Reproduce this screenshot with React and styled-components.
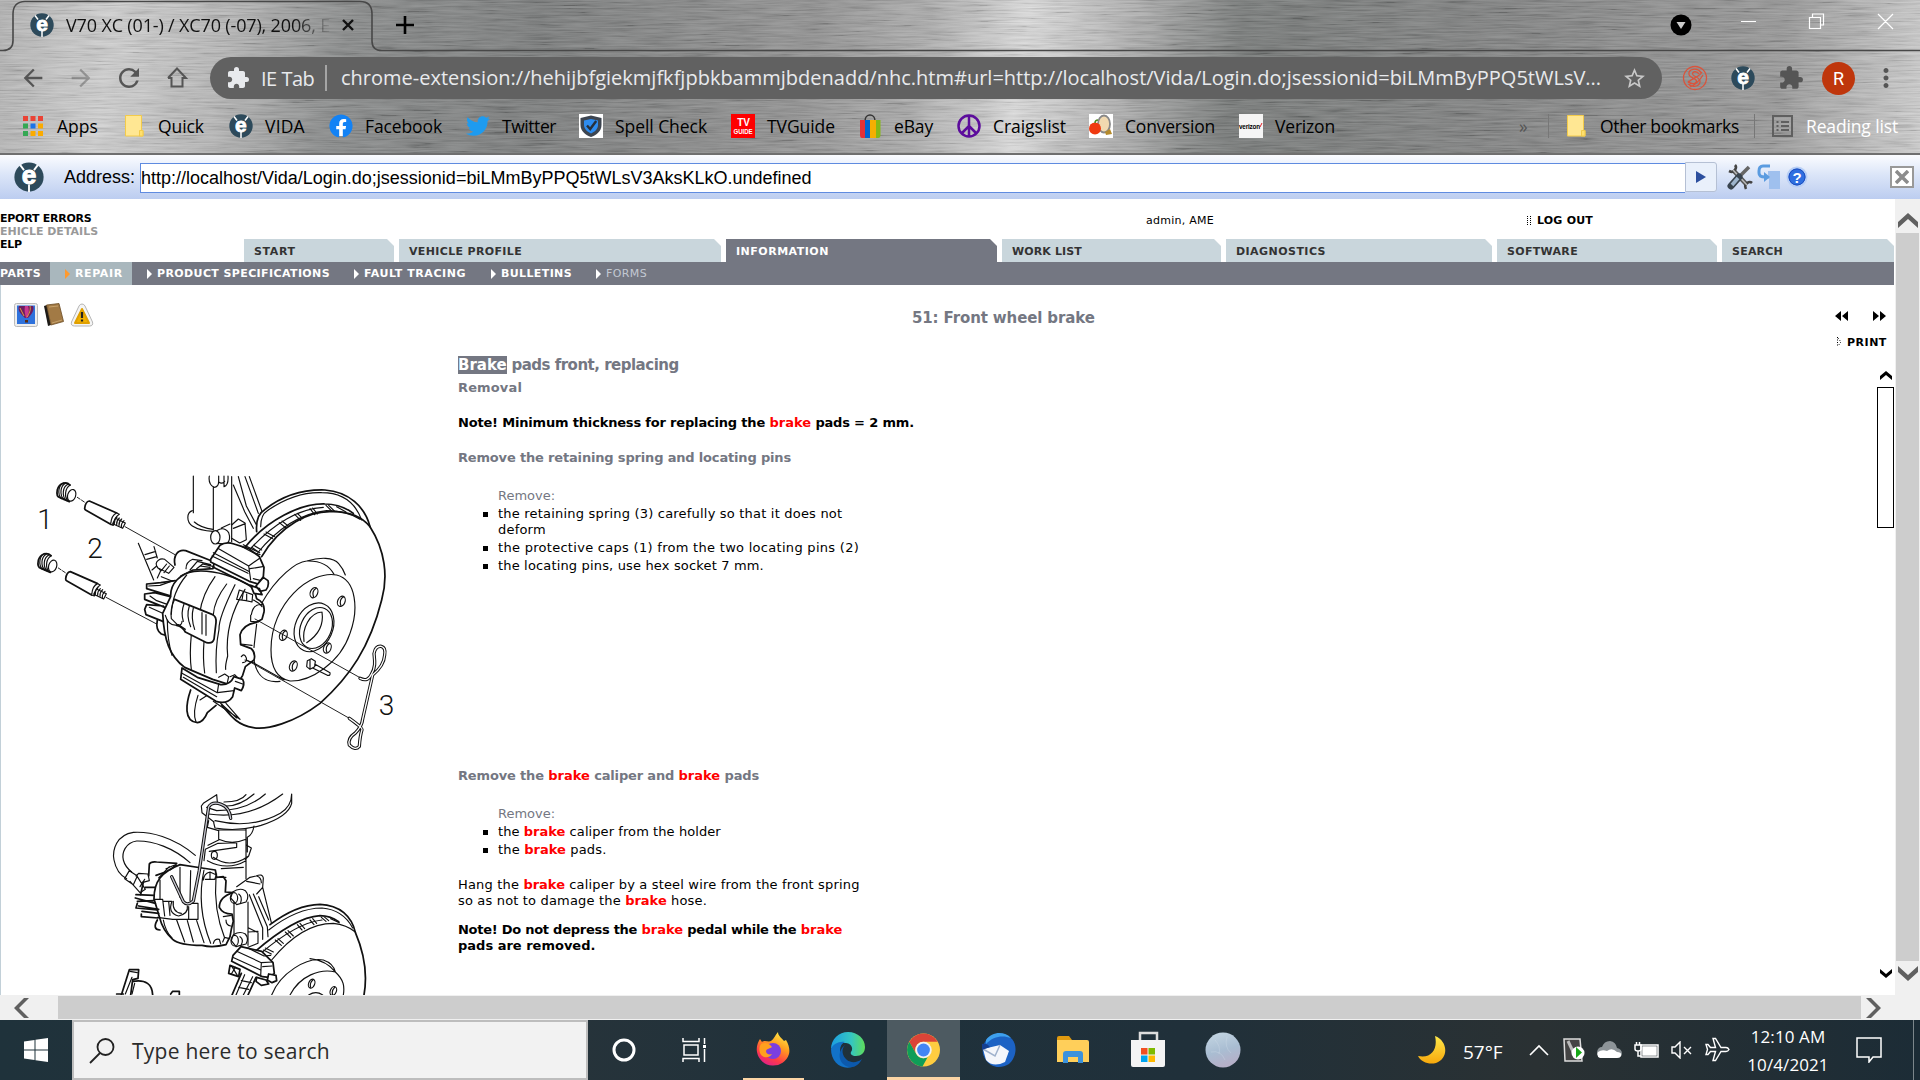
import React from 'react';
import styled, { createGlobalStyle, css } from 'styled-components';
import {
  MdArrowBack,
  MdArrowForward,
  MdRefresh,
  MdExtension,
  MdStarBorder,
  MdMoreVert,
} from 'react-icons/md';
import { FaFacebook, FaTwitter } from 'react-icons/fa';

const GlobalStyle = createGlobalStyle`
  * {
    box-sizing: border-box;
  }
  body {
    margin: 0;
    overflow: hidden;
    background: #fff;
  }
  svg {
    display: block;
    flex: none;
  }
`;

const uiFont = css`
  font-family: 'Open Sans', 'Noto Sans', sans-serif;
`;
const pageFont = css`
  font-family: 'DejaVu Sans', sans-serif;
`;

const Screen = styled.div`
  width: 1920px;
  height: 1080px;
  display: flex;
  flex-direction: column;
  overflow: hidden;
`;

/* ---------- browser frame ---------- */

const BrowserFrame = styled.header`
  position: relative;
  height: 155px;
  flex: none;
  display: flex;
  flex-direction: column;
  border-bottom: 2px solid #6f6f6f;
  isolation: isolate;
  ${uiFont}
`;

const FrameArt = styled.svg`
  position: absolute;
  inset: 0;
  z-index: -1;
`;

const TabStrip = styled.div`
  height: 50px;
  display: flex;
  align-items: center;
  padding-left: 30px;
`;

const TabTitle = styled.div`
  width: 266px;
  margin-left: 12px;
  font-size: 18px;
  letter-spacing: -0.15px;
  white-space: nowrap;
  color: #111;
  mask-image: linear-gradient(90deg, #000 228px, transparent 268px);
`;

const TabClose = styled.svg`
  margin: 0 41px 0 9px;
`;

const WindowButtons = styled.div`
  display: flex;
  align-items: center;
  margin-left: auto;
`;

const Toolbar = styled.div`
  height: 55px;
  display: flex;
  align-items: center;
  padding: 1px 0 0 19px;
  color: #555;
`;

const NavIcon = styled.div`
  width: 28px;
  margin-right: 20px;
  display: flex;
  justify-content: center;
  opacity: ${(p) => (p.$off ? 0.45 : 1)};
`;

const Omnibox = styled.div`
  width: 1452px;
  height: 42px;
  margin-left: -1px;
  border-radius: 21px;
  background: #616161;
  color: #e8eaed;
  display: flex;
  align-items: center;
  padding-left: 16px;
  font-size: 20px;
`;

const SiteName = styled.span`
  margin-left: 11px;
  padding-top: 1px;
  width: 64px;
  letter-spacing: -0.5px;
  white-space: nowrap;
`;

const Url = styled.span`
  border-left: 2px solid #a5a5a5;
  line-height: 26px;
  padding-left: 14px;
  width: 1297px;
  white-space: nowrap;
`;

const Avatar = styled.div`
  width: 33px;
  height: 33px;
  margin: 0 -7px 0 -5px;
  border-radius: 50%;
  background: #bf360c;
  color: #fff;
  font: 18px/33px Roboto, sans-serif;
  text-align: center;
`;

const Extensions = styled.div`
  display: flex;
  align-items: center;
  margin-left: 20px;
  gap: 23px;
`;

const Bookmarks = styled.nav`
  height: 42px;
  display: flex;
  align-items: center;
  padding-left: 21px;
  font-size: 17.5px;
  color: #000;
`;

const Bookmark = styled.div`
  width: ${(p) => p.$w}px;
  flex: none;
  display: flex;
  align-items: center;
  gap: 12px;
  letter-spacing: ${(p) => p.$ls || 0}px;
  white-space: nowrap;
  color: ${(p) => p.$color || '#000'};
`;

const FacebookMark = styled(FaFacebook)`
  color: #1282f5;
  border-radius: 50%;
  background: radial-gradient(#fff 60%, transparent 62%);
`;

const BarDivider = styled.i`
  width: 1px;
  height: 24px;
  margin-right: 15px;
  background: #777;
`;

const Overflow = styled.span`
  width: 29px;
  color: #555;
`;

/* ---------- address strip ---------- */

const AddressBar = styled.div`
  height: 44px;
  flex: none;
  display: flex;
  align-items: center;
  padding-left: 14px;
  background: linear-gradient(#fbfcff, #dbe5f8 45%, #bccdf0);
  font-family: 'Liberation Sans', Arial, sans-serif;
  font-size: 18px;
`;

const AddressLabel = styled.label`
  width: 77px;
  padding-left: 1px;
  margin-left: 19px;
  white-space: nowrap;
`;

const AddressInput = styled.div`
  width: 1545px;
  height: 30px;
  margin-top: 2px;
  border: 1px solid #5f8be0;
  border-right: 0;
  background: #fff;
  line-height: 28px;
`;

const GoButton = styled.div`
  width: 32px;
  height: 30px;
  border: 1px solid #b5c0d4;
  border-radius: 0 3px 3px 0;
  background: #e9f0fb;
  display: grid;
  place-items: center;
`;

const AddressTools = styled.div`
  display: flex;
  gap: 4px;
  margin-left: 10px;
`;

const CloseBox = styled.div`
  width: 24px;
  height: 22px;
  margin-left: 81px;
  border: 2px solid #999;
  background: #fff;
  display: grid;
  place-items: center;
`;

/* ---------- VIDA page ---------- */

const Viewport = styled.div`
  height: 796px;
  flex: none;
  display: flex;
  background: #fff;
`;

const Page = styled.main`
  width: 1894px;
  margin-right: 1px;
  display: flex;
  flex-direction: column;
  overflow: hidden;
  ${pageFont}
`;

const Head = styled.div`
  height: 63px;
  flex: none;
  display: grid;
  grid-template-columns: 244px 1fr;
`;

const SideLinks = styled.div`
  padding-top: 13px;
  font-size: 11px;
  line-height: 13px;
  font-weight: bold;
  white-space: nowrap;
`;

const SideLink = styled.div`
  letter-spacing: ${(p) => p.$ls || 0}px;
  color: ${(p) => (p.$off ? '#999' : '#000')};
`;

const HeadTop = styled.div`
  height: 40px;
  display: flex;
  align-items: center;
  padding: 2px 0 0 902px;
  font-size: 11px;
`;

const UserName = styled.span`
  width: 381px;
  letter-spacing: 0.26px;
`;

const BoldLink = styled.b`
  margin-left: ${(p) => p.$gap || 0}px;
  font-size: 11px;
  letter-spacing: ${(p) => p.$ls || 0}px;
`;

const MainTabs = styled.div`
  display: flex;
  gap: 5px;
`;

const MainTab = styled.div`
  width: ${(p) => p.$w}px;
  height: 23px;
  padding-left: 10px;
  line-height: 26px;
  font-size: 11px;
  font-weight: bold;
  letter-spacing: ${(p) => p.$ls || 0}px;
  background: ${(p) => (p.$active ? '#747782' : '#c9d6dc')};
  color: ${(p) => (p.$active ? '#fff' : '#333')};
  clip-path: polygon(0 0, calc(100% - 7px) 0, 100% 7px, 100% 100%, 0 100%);
`;

const SubNav = styled.div`
  height: 23px;
  flex: none;
  display: flex;
  background: #747782;
  color: #fff;
  font-size: 11px;
  font-weight: bold;
  line-height: 23px;
`;

const SubItem = styled.div`
  width: ${(p) => p.$w}px;
  padding-left: ${(p) => (p.$plain ? 0 : 15)}px;
  flex: none;
  display: flex;
  align-items: center;
  gap: 5px;
  white-space: nowrap;
  letter-spacing: ${(p) => p.$ls || 0}px;
  background: ${(p) => (p.$active ? '#a9b7bd' : 'none')};
  color: ${(p) => (p.$off ? '#c3c9d2' : '#fff')};
  font-weight: ${(p) => (p.$off ? 'normal' : 'bold')};

  &::before {
    content: ${(p) => (p.$plain ? 'none' : "''")};
    border: solid transparent;
    border-width: 5px 0 5px 5px;
    border-left-color: ${(p) => (p.$active ? '#ff9a2e' : '#fff')};
  }
`;

const Body = styled.div`
  flex: 1;
  display: flex;
  flex-direction: column;
  border-left: 1px solid #c2d0d8;
`;

const DocHead = styled.div`
  height: 70px;
  display: flex;
`;

const DocIcons = styled.div`
  width: 911px;
  display: flex;
  gap: 5px;
  padding: 18px 0 0 13px;
`;

const DocTitle = styled.h1`
  width: 922px;
  margin: 0;
  padding-top: 24px;
  font-size: 15px;
  line-height: 18px;
  letter-spacing: -0.13px;
  color: #747782;
`;

const DocActions = styled.div`
  padding-top: 26px;
  display: flex;
  flex-direction: column;
  gap: 16px;
`;

const ActionRow = styled.div`
  display: flex;
  align-items: center;
  gap: ${(p) => p.$gap}px;
  height: 10px;
  padding-left: 1px;
`;

const Doc = styled.div`
  display: flex;
  height: 640px;
`;

const Figures = styled.div`
  width: 457px;
  padding-top: 105px;
  margin-left: -1px;
  margin-right: 1px;
  overflow: hidden;
`;

const Fig = styled.svg`
  margin: ${(p) => p.$m};
  fill: none;
  stroke: #111;
  stroke-width: 3.5;
  stroke-linecap: round;
  stroke-linejoin: round;

  .w {
    fill: #fff;
  }
  .b {
    stroke-width: 5.2;
  }
  .t {
    stroke-width: 2.8;
  }
  .wire {
    stroke-width: 10;
  }
  .core {
    stroke-width: 4;
  }
  text {
    font: 300 84px Roboto, sans-serif;
    fill: #111;
    stroke: none;
  }
`;

const Article = styled.article`
  width: 1419px;
  padding-top: 1px;
  font-size: 13px;
  line-height: 16px;
  color: #000;
`;

const Hit = styled.b`
  color: #f00;
  letter-spacing: 0;
`;

const ArticleTitle = styled.h2`
  margin: 0 0 6px;
  font-size: 15px;
  line-height: 18px;
  letter-spacing: -0.5px;
  color: #747782;

  mark {
    background: #747782;
    color: #fff;
    letter-spacing: 0;
  }
`;

const Line = styled.div`
  margin-bottom: ${(p) => p.$mb || 0}px;
  letter-spacing: ${(p) => p.$ls || 0}px;
  font-weight: ${(p) => (p.$bold ? 'bold' : 'normal')};
  color: ${(p) => (p.$grey ? '#747782' : '#000')};
`;

const Steps = styled.div`
  padding-left: 40px;
  height: ${(p) => p.$h}px;
`;

const Step = styled(Line)`
  margin: 2px 0 0 -15px;
  display: flex;
  gap: 10px;

  &::before {
    content: '';
    width: 5px;
    height: 5px;
    margin-top: 6px;
    background: #000;
  }
`;

const DocScroll = styled.div`
  width: 17px;
  display: flex;
  flex-direction: column;
  align-items: center;
  padding: 16px 0 17px;
`;

const DocThumb = styled.div`
  width: 17px;
  height: 141px;
  margin: 7px 0 auto;
  border: 1px solid #000;
`;

const VScroll = styled.div`
  width: 25px;
  display: flex;
  flex-direction: column;
  align-items: center;
  background: #f0f0f0;
  padding: 14px 1px;
`;

const VThumb = styled.div`
  width: 23px;
  height: 728px;
  margin: 5px 0;
  background: #cdcdcd;
`;

const HScroll = styled.div`
  height: 25px;
  flex: none;
  display: flex;
  align-items: center;
  background: #f0f0f0;
  padding-left: 14px;
`;

const HThumb = styled.div`
  width: 1803px;
  height: 23px;
  margin: 0 5px 0 29px;
  background: #cdcdcd;
`;

/* ---------- taskbar ---------- */

const Taskbar = styled.footer`
  height: 60px;
  flex: none;
  display: flex;
  background: linear-gradient(90deg, #1f323b, #26333a 30%, #1f313b 45%, #20303a 62%, #2a3133 80%, #1c2c36);
  color: #fff;
  ${uiFont}
`;

const StartButton = styled.div`
  width: 72px;
  display: grid;
  place-items: center;
`;

const SearchBox = styled.div`
  width: 516px;
  height: 60px;
  border: 2px solid #bdbdbd;
  background: #f2f2f2;
  color: #2b2b2b;
  font-size: 21px;
  display: flex;
  align-items: center;
  padding: 2px 0 0 15px;
  gap: 17px;
  letter-spacing: 0.25px;
`;

const AppButton = styled.div`
  width: ${(p) => p.$w || 75}px;
  height: 60px;
  display: grid;
  place-items: center;
  padding: 0 ${(p) => p.$pr || 0}px 1px 0;
  background: ${(p) => (p.$active ? '#4d5a61' : 'none')};
  box-shadow: ${(p) => (p.$active ? 'inset 0 -3px #fcd5a5' : 'none')};
`;

const RunningMark = styled.div`
  width: 61px;
  height: 60px;
  display: grid;
  place-items: center;
  border-bottom: 3px solid #fcd5a5;
  margin-top: 1px;
`;

const Tray = styled.div`
  margin-left: auto;
  display: flex;
  align-items: center;
  padding-bottom: 1px;
`;

const Weather = styled.span`
  width: 66px;
  margin-left: 17px;
  padding-top: 4px;
  font-size: 19px;
`;

const TrayIcons = styled.div`
  display: flex;
  align-items: center;
  gap: 12px;
`;

const Clock = styled.div`
  width: 84px;
  margin: 3px 0 0 16px;
  text-align: center;
  font-size: 17px;
  line-height: 28px;
  letter-spacing: 0.1px;
  white-space: nowrap;
`;

const ShowDesktop = styled.i`
  width: 7px;
  height: 60px;
  margin: 1px 0 0 31px;
  border-left: 1px solid #7c868b;
`;

/* ---------- icons ---------- */

const VidaLogo = ({ size = 24 }) => (
  <svg width={size} height={size} viewBox="0 0 24 24">
    <circle cx="12" cy="12" r="11.7" fill="#2d4a5b" />
    <path d="M5 2.5 8 6.500M19 2.5l-3 4M12 18v6" stroke="#fff" strokeWidth="1.5" />
    <text
      x="12"
      y="17.8"
      textAnchor="middle"
      fontFamily="Liberation Sans, sans-serif"
      fontWeight="bold"
      fontSize="21"
      fill="#fff"
      stroke="#fff"
      strokeWidth=".8"
    >
      e
    </text>
  </svg>
);

const APP_COLORS = ['#ea4335', '#ea4335', '#ea4335', '#34a853', '#1a73e8', '#fbab00', '#34a853', '#fbab00', '#fbab00'];

const AppsIcon = () => (
  <svg width="24" height="24">
    {APP_COLORS.map((c, i) => (
      <rect key={i} x={2 + (i % 3) * 7.5} y={2 + Math.floor(i / 3) * 7.5} width="5" height="5" fill={c} />
    ))}
  </svg>
);

const FolderIcon = () => (
  <svg width="24" height="24">
    <path d="M3.5 1.5h16v15H21V22H3.5z" fill="#ffe793" stroke="#f3cb4a" />
    <path d="M17.5 22v-5.5H21V22z" fill="#ffe06e" stroke="#f3cb4a" />
  </svg>
);

const ShieldIcon = () => (
  <svg width="24" height="24">
    <rect width="24" height="24" fill="#fff" />
    <path d="M12 1.5 22.5 4v7c0 6-5 10-10.5 12C6.5 21 1.5 17 1.5 11V4z" fill="#3d4550" />
    <path d="M12 5l7 1.5V11c0 4-3.5 7-7 8.5C8.5 18 5 15 5 11V6.5z" fill="#2e8cf0" />
    <path d="m8 11.5 3.2 3.5 6-8" fill="none" stroke="#26303c" strokeWidth="2.4" />
  </svg>
);

const TvGuideIcon = () => (
  <svg width="24" height="24" fontFamily="Liberation Sans, sans-serif" fontWeight="bold" fill="#fff" textAnchor="middle">
    <rect width="24" height="24" fill="#f00" />
    <text x="12.5" y="12" fontSize="10">TV</text>
    <text x="12" y="19.5" fontSize="6.5" textLength="19" lengthAdjust="spacingAndGlyphs">GUIDE</text>
  </svg>
);

const EbayIcon = () => (
  <svg width="24" height="24">
    <path d="M7 7c0-8 10-8 10 0" fill="none" stroke="#333" strokeWidth="1.5" />
    <path d="M2 6h5v18H4q-2 0-2-3z" fill="#e53238" />
    <path d="M7 6h5v18H7z" fill="#0064d2" />
    <path d="M12 6h6v18h-6z" fill="#f5af02" />
    <path d="M18 6h4.500v15q0 3-2.500 3h-2z" fill="#86b817" />
  </svg>
);

const PeaceIcon = () => (
  <svg width="24" height="24" fill="none" stroke="#5c0c9c" strokeWidth="2.5">
    <circle cx="12" cy="12" r="10.5" />
    <path d="M12 1.500v21M12 12l-7.500 7.500M12 12l7.500 7.500" />
  </svg>
);

const ConversionIcon = () => (
  <svg width="24" height="24">
    <rect width="24" height="24" fill="#fff" />
    <ellipse cx="15" cy="10" rx="6" ry="8.5" fill="#f1d9b0" stroke="#888" strokeWidth="1.8" />
    <path d="m16 18 5-3 2 5-6 1z" fill="#b58a2a" />
    <circle cx="6" cy="14.5" r="6" fill="#f03a10" />
    <path d="M6 9q0-3 3-3" fill="none" stroke="#4f8a1d" strokeWidth="1.5" />
  </svg>
);

const VerizonIcon = () => (
  <svg width="24" height="24">
    <rect width="24" height="24" fill="#f5f5f5" />
    <text x="0" y="14.5" fontSize="7" fontFamily="Liberation Sans, sans-serif" fontWeight="bold" textLength="21" lengthAdjust="spacingAndGlyphs">verizon</text>
    <path d="m21 13 2-4" stroke="#e01e26" />
  </svg>
);

const ReadingListIcon = () => (
  <svg width="24" height="24" fill="none" stroke="#5f5f5f" strokeWidth="2">
    <path d="M3 2h19v20H3zM6.500 8h2M11 8h8M6.500 12h2M11 12h8M6.500 16h2M11 16h8" />
  </svg>
);

const HomeIcon = () => (
  <svg width="22" height="24" fill="none" stroke="#555" strokeWidth="2">
    <path d="M5.500 11v9.500h11V11M2 12l9-9.500 9 9.500h-3.500M2 12h3.500" />
  </svg>
);

const SeekIcon = () => (
  <svg width="26" height="26" fill="none" stroke="#d9543c" strokeWidth="1.3">
    <circle cx="13" cy="13" r="11.5" />
    <path d="M19 7.500C15 2 6 4 7 9.500c.8 4 8 3.500 7.500 7-.6 3-6 3-8.500-.5M17 9c-2-3.500-7-2.500-6.500 0 .5 3 8 3 7.500 8-.5 4.500-8 6-11.500 2M6 18C10 12 17 13 20 7M8 22c5-2 10-7 13-12" />
  </svg>
);

const BalloonIcon = () => (
  <svg width="24" height="24">
    <rect x=".5" y=".5" width="23" height="23" rx="2" fill="#eee" stroke="#bbb" />
    <rect x="3" y="2.5" width="18" height="18.5" fill="#2f72dc" />
    <path d="M5 3h14c2 4-2 9-5 12h-3C8 12 3 8 5 3z" fill="#6d1c62" />
    <path d="M11 3c-1 4 0 8 1 12l2-1c1-4 1-8 0-11z" fill="#c9388e" />
    <path d="M16 3c1 4-1 8-3 11M6 5l4 8" stroke="#d9a03c" fill="none" />
    <rect x="11" y="17" width="3" height="2.5" fill="#5a2d12" />
  </svg>
);

const BookIcon = () => (
  <svg width="22" height="24">
    <path d="m1 3 3-1 4 20-3 1z" fill="#1d1a17" />
    <path d="M3.500 2 16 .5l4.500 18L8 22z" fill="#a27a45" stroke="#6b4c24" strokeWidth=".8" />
    <path d="m6 4 9-1M9 20l10-3" stroke="#c7a26b" />
  </svg>
);

const WarningIcon = () => (
  <svg width="24" height="24">
    <path d="M12 1q2 0 3 2l7.500 16q1 4-3 4h-15q-4 0-3-4L9 3q1-2 3-2z" fill="#f4f4f4" stroke="#b5b5b5" />
    <path d="M12 6l7 14H5z" fill="#f0b000" stroke="#e0a000" strokeWidth="2" strokeLinejoin="round" />
    <path d="M12 9v6M12 16.500v2" stroke="#222" strokeWidth="2.2" />
  </svg>
);

const Chevron = ({ dir, w = 20, h = 15, color = '#606060', t = 6 }) => {
  const up = `M0 ${h}V${h - t}L${w / 2} 0 ${w} ${h - t}V${h}L${w / 2} ${t}z`;
  const left = `M${h} 0H${h - t + 1}L0 ${w / 2} ${h - t + 1} ${w}H${h}L${t - 1} ${w / 2}z`;
  const flat = dir === 'left' || dir === 'right';
  const flips = {
    down: `scale(1 -1) translate(0 -${h})`,
    right: `scale(-1 1) translate(-${h} 0)`,
  };
  return (
    <svg width={flat ? h : w} height={flat ? w : h} fill={color}>
      <path d={flat ? left : up} transform={flips[dir]} />
    </svg>
  );
};

const FirefoxIcon = () => (
  <svg width="36" height="38">
    <defs>
      <linearGradient id="ff" x1=".8" y1="0" x2=".3" y2="1">
        <stop offset="0" stopColor="#fff04a" />
        <stop offset=".4" stopColor="#ff9b1f" />
        <stop offset=".75" stopColor="#ff3b47" />
        <stop offset="1" stopColor="#e0208a" />
      </linearGradient>
    </defs>
    <path d="M2 21C1 16 3 11 5 8l2 3c1-1 2-1 3-1 2 0 4 1 6 0 3-2 4-6 7-9 0 4 4 6 6 9l2-1c3 5 4 10 3 14a16.500 16.500 0 0 1-32-2z" fill="url(#ff)" />
    <circle cx="18" cy="20" r="8" fill="#7b3fe0" />
    <path d="M6 13c4-2 8-1 11 3-2 2-5 1-6 4 0 3 3 4 6 3-3 5-10 4-12-1-1-3-1-6 1-9z" fill="#ffa01e" />
  </svg>
);

const EdgeIcon = () => (
  <svg width="36" height="36" viewBox="0 0 36 36">
    <defs>
      <linearGradient id="eg" x1="0" x2="1">
        <stop offset="0" stopColor="#1b9de2" />
        <stop offset=".6" stopColor="#35c6c0" />
        <stop offset="1" stopColor="#5fdc5a" />
      </linearGradient>
    </defs>
    <path d="M1 17C1 7 9 0 18 0c10 0 17 7 17 15 0 6-4 9-9 9-4 0-6-2-5-4 2-2 2-8-5-9-7 0-12 2-15 6z" fill="url(#eg)" />
    <path d="M1 17c2-5 8-8 14-7-5 2-6 8-4 14 2 5 6 9 11 11C11 38 1 30 1 17z" fill="#1272c8" />
    <path d="M15 13c-4 4-3 11 2 15 4 3 10 3 15-1-3 6-8 9-13 8-10-2-13-15-4-22z" fill="#0c59ac" />
  </svg>
);

const ChromeIcon = () => (
  <svg width="33" height="34" viewBox="0 0 32 32">
    <circle cx="16" cy="16" r="16" fill="#ffcd40" />
    <path d="M2.200 8A16 16 0 0 1 29.800 8H16a8 8 0 0 0-7 12z" fill="#db4437" />
    <path d="M2.200 8 9.100 20A8 8 0 0 0 20 23l-5 9A16 16 0 0 1 2.200 8z" fill="#0f9d58" />
    <circle cx="16" cy="16" r="8" fill="#f1f1f1" />
    <circle cx="16" cy="16" r="6.2" fill="#4285f4" />
  </svg>
);

const ThunderbirdIcon = () => (
  <svg width="36" height="36">
    <path d="M4 12C8 1 24-2 32 7c6 7 4 19-3 25-8 5-18 4-23-4C2 23 2 17 4 12z" fill="#1c62c4" />
    <path d="M6 8C12-1 25-1 31 6c-8-3-18-2-25 6z" fill="#3ea0ee" />
    <path d="m3 17 17-4 9 6-4 11q-12 6-19-2z" fill="#f4f6fb" />
    <path d="m3 17 12 7 5-11" fill="none" stroke="#9fb1cc" strokeWidth="1.5" />
    <path d="M2 12c3-1 6 0 8 3l-8 3z" fill="#153f91" />
  </svg>
);

const ExplorerIcon = () => (
  <svg width="34" height="30">
    <path d="M1 3q0-2 2-2h10l3 4H1z" fill="#e09a10" />
    <path d="M1 5h30q2 0 2 2v20H1z" fill="#ffcf5a" />
    <path d="M7 28V19q0-3 3-3h14q3 0 3 3v9h-5v-6H12v6z" fill="#3b92dc" />
  </svg>
);

const StoreIcon = () => (
  <svg width="36" height="37">
    <path d="M10 12V2h17v10" fill="none" stroke="#ddd" strokeWidth="2.5" />
    <path d="M1 9h34v25q0 2-2 2H3q-2 0-2-2z" fill="#f4f4f4" />
    <path d="M11 17h6.500v6.500H11z" fill="#f25022" />
    <path d="M18.500 17H25v6.500h-6.500z" fill="#7fba00" />
    <path d="M11 24.500h6.500V31H11z" fill="#00a4ef" />
    <path d="M18.500 24.500H25V31h-6.500z" fill="#ffb900" />
  </svg>
);

const GlobeIcon = () => (
  <svg width="36" height="36">
    <defs>
      <linearGradient id="gb" x2=".3" y2="1">
        <stop offset="0" stopColor="#c6d8e4" />
        <stop offset=".6" stopColor="#a9bdd2" />
        <stop offset="1" stopColor="#b5b0c8" />
      </linearGradient>
    </defs>
    <circle cx="18" cy="18" r="17.5" fill="url(#gb)" />
    <path d="M10 8q6 6 4 14M22 5q-3 10 4 16M6 20q10-2 14 8" stroke="#d6e2ea" fill="none" opacity=".3" />
  </svg>
);

const MoonIcon = () => (
  <svg width="29" height="28">
    <defs>
      <linearGradient id="mn" x2="0" y2="1">
        <stop offset="0" stopColor="#ffe84a" />
        <stop offset="1" stopColor="#f7a80c" />
      </linearGradient>
    </defs>
    <path d="M18 0c13 5 14 22 1 27-7 2-15-1-18-7 14 3 20-8 17-20z" fill="url(#mn)" />
  </svg>
);

/* ---------- illustrations ---------- */

const Pin = ({ x, y }) => (
  <g transform={`translate(${x} ${y})`}>
    <path className="w" d="M-12-29C-32-27-36 2-24 19L6 29 20-4 8-18z" stroke="none" />
    <path className="b" d="M10-22C-2-34-22-28-28-8c-3 14 0 22 8 24l28 12" />
    <path d="M-8-29c-18 8-20 34-8 48M-2-28c-18 8-20 36-6 50M5-25c-18 8-20 36-6 50M11-22C-5-14-9 16 6 27" />
    <ellipse className="w" cx="15" cy="9" rx="12" ry="18" transform="rotate(18 15 9)" />
    <path d="M32 15l24 16" strokeDasharray="10 5" className="t" />
    <path className="w b" d="M68 26q-12 2-14 22 0 4 4 6l74 42 18-34z" />
    <path className="w" d="M150 62q-16 6-18 34l8 3q2-24 18-33zM146 78l30 14-8 16-30-14z" />
    <path d="M151 74q-9 8-8 20M158 77q-9 8-8 20M165 80q-9 8-8 20M172 85q-9 8-8 20" />
  </g>
);

const CLIP_PATH =
  'M1080 655q24 12 34-12c14-22 10-42 8-62q4-24 22-22 14 4 10 26-2 32-36 60l-30 132q-2 22-22 42-24 16-18 36 18 18 30 4 2-32 8-50 2-6-38-34';

const HANGER_PATH = 'M452 145q-4-34-28-42-28-10-38 8l-28 190-18 92q-18 16-30 2l-35-75';

const STUDS = [
  [942, 398],
  [1024, 424],
  [850, 526],
  [982, 564],
  [880, 618],
];

const CaliperFigure = () => (
  <Fig $m="0" width="420" height="300" viewBox="0 0 1260 900">
    <text x="112" y="208">1</text>
    <text x="262" y="293">2</text>
    <text x="1136" y="765">3</text>
    <Pin x={200} y={97} />
    <Pin x={143} y={309} />
    {/* strut */}
    <path d="M580 48v110M640 80v130M695 50v195M628 48q-4 24 14 34 14 0 14-18V48M656 66q10 8 18-2M672 48v32q14-4 12-32" />
    <path d="M577 152c-18 6-18 34 0 46q22 14 62 16M583 186q20 18 56 22M700 75l34 80 26 50M715 50l24 88 30 56M735 50l40 110M748 50l38 104" />
    <ellipse cx="646" cy="232" rx="14" ry="20" />
    <path d="M650 212q22-14 36 6 8 22-6 34l-30-2M664 204l26-12M695 195l20-18 20 12 4 50-20 10-24-14M700 205l36-14" />
    {/* disc */}
    <path className="b" d="M785 290C840 195 930 150 1000 155c50 0 85 15 110 45 45 70 55 150 35 220-35 140-95 230-185 310-80 60-160 80-200 73-50-8-70-38-95-68" />
    <path className="b" d="M770 215q-4-50 24-66C850 105 910 88 975 90c70 5 120 50 135 110" />
    <path d="M782 200q0-36 20-48C860 112 910 96 965 98q90 0 120 82" />
    <path className="b" d="M735 262C800 180 900 130 975 132c35 0 65 13 85 28" />
    <path d="M750 268C820 190 900 145 970 142M770 282c60-74 130-122 210-130q60 0 100 26" />
    <path d="M755 262l24 16M761 256l24 14M792 222l26 14M798 216l26 14M838 188l20 16M846 183l20 16M884 163l18 18M892 160l16 16M930 146l14 18M938 144l14 18M978 136l18 18M986 136l18 18M1010 140l28 16" />
    {/* hub */}
    <path d="M785 430C830 350 890 305 920 303c40-12 80-12 96 8q14 16 20 34M920 303q60-2 82 40" />
    <path d="M813 570C812 430 930 330 1010 345c60 15 66 105 40 175-30 90-120 145-180 143-40-8-57-43-57-93zM762 600c8 48 36 70 78 64M752 604l100 56" />
    <ellipse cx="942" cy="502" rx="56" ry="76" transform="rotate(24 942 502)" />
    <ellipse cx="948" cy="504" rx="46" ry="64" transform="rotate(24 948 504)" />
    <path d="M966 456c-38 2-60 50-54 88M966 456c6 40-12 70-46 92" />
    {STUDS.map(([x, y]) => (
      <g key={x} transform={`translate(${x} ${y}) rotate(22)`}>
        <ellipse rx="11" ry="16" />
        <path d="M1-15q-10 14 3 28" />
      </g>
    ))}
    <path d="M922 602l12-6 12 8-2 16-14 8-10-8zM930 600v24M944 612l46 26q2 10-8 8l-44-22" />
    {/* hose fitting and upper guide */}
    <path className="w" stroke="none" d="M415 250l44 108 26-8 40-30-60-60z" />
    <path d="M415 250l46 110M462 260l10 34M435 284l32-10M440 298l30-8M456 330l14-12 12 14-10 22" />
    <path className="w" d="M476 300q-14 10-2 24l32 16 16-18-28-24q-10-4-18 2zM500 312l-16 20M508 318l-16 20M484 350l34 14" />
    <path className="w b" d="M525 315c-6-28 8-48 32-43l86 34-4 20-60 4-36 18" />
    <path d="M558 326q0-20 20-28l28 4M570 330l22-26 40 10M590 326l18-14 34 8M600 318l30 4" />
    {/* left fins */}
    <path className="w b" d="M526 362l-44 6-42 4v14l78 24M520 412l-56-14-30 4v16l70 28M490 438l-50-4-6 14 4 16 60 24M472 480q-6 30 12 42l14 4" />
    <path d="M446 378l34-2 40-14M450 408l20 14 40 14M448 442l50 22" />
    {/* caliper body */}
    <path className="w b" d="M512 410c-2-40 30-70 70-76 60-6 130 16 180 52l8 30q26 12 22 40l-6 22-20 10q-36 6-46 36l2 30 32 12q14 14 8 34l-26 20-8 26q-12 26-40 28l-50-16-84-36c-46-34-62-84-66-162z" />
    <path d="M560 345q-44 52-46 118M645 350q-38 52-46 110M680 372q-38 50-40 92M735 388q-62 100-52 200-8 30-6 40M705 374q-50 100-48 134-12 60-8 130M574 524q-6 60 0 104M612 545q-4 50 2 94M502 480q0 60 14 106" />
    <path className="w b" d="M524 418l114 46q12 6 10 24l-6 50q-4 14-22 10l-64-32q-8-16-26-20" />
    <path d="M524 418q-14 28-10 58l18 18q14 4 14-10M552 432q-10 26-2 52M568 438q-10 30 4 62M580 444q-8 30 4 64M606 458v64M618 464v62M496 466q10 36 40 28l20 14" />
    <path d="M710 418l8-28 40 14-2 22-18-4zM730 396l-4 24M740 402v20M760 420q18 8 26 20M754 464q6-34 32-30M752 466v18l24 2M770 492q-6 50-8 70M722 552l34 4M724 590q8-12 14 2t-10 16M735 600l24 8M656 652l18-10 12 8-4 18M690 650l14-6 8 8-8 18" />
    {/* upper bracket */}
    <path className="w b" d="M632 298l28-42q18-12 42-4l44 14 32 24 14 32-2 28-16 22-26-8-116-58z" />
    <path d="M656 266l90 52 34-24M746 318l6 42M636 288l108 52M640 278l106 56M722 258l38 20 20 6M730 254l40 20M760 356l24 6M750 326l38-6" />
    <path className="w b" d="M790 352l14 10q4 16-6 28l-18 4-12-16zM752 376l26 10 8 18-24-4z" />
    <path className="b" d="M640 322l118 58" />
    {/* lower bracket */}
    <path className="w b" d="M572 690c-14 40-22 94 20 98 18-2 26-20 30-30l26-22" />
    <path d="M594 706c-10 30-14 60-6 80M600 720l22-14" />
    <path className="w b" d="M546 624l-4 34 106 66q34 10 50-14l6-26 20 8q12-20 4-34l-26-8q-12 26-40 24l-70-22z" />
    <path d="M546 640l106 58 4-26M550 652l100 58M652 698l50-6M706 664l22 8M640 724l80 54M660 728l50 46M678 730l42 48" />
    {/* leader lines */}
    <path className="t" d="M375 200l150 84M318 412l152 80M765 477l315 176M740 600l310 176" />
    {/* retaining spring */}
    <path className="wire" d={CLIP_PATH} />
    <path className="core" d={CLIP_PATH} stroke="#fff" />
  </Fig>
);

const HangingFigure = () => (
  <Fig $m="10px 0 0 80px" width="340" height="225" viewBox="0 0 1020 675">
    {/* spring coils */}
    <path d="M366 128l-2-20 6-8 40-26 2 22M366 128l36 28M405 152q110 26 196-22 34-22 34-58v28q-10 40-92 66-70 20-138 8l-4-16M386 132q120 18 222-60M380 112l30 10q90 0 146-50M432 96q50 0 66-22M440 108q40 0 82-36" />
    {/* strut */}
    <path d="M386 152l-4 20 34 10v26q40 18 82 0M416 180h82M498 176v150M522 168q-4 26-20 34v44M500 226l14 8-8 24-10 10M384 226l32-16M376 238l38-18 56-2v14l-82 12M376 238l-4 34M382 272q60 32 116 0M400 262q50 36 106-4M424 296l66-4" />
    <ellipse cx="403" cy="256" rx="9" ry="12" />
    {/* hose */}
    <path d="M346 256c-66-56-136-72-186-69-50 7-64 53-58 83 5 26 18 46 38 56M330 278c-50-45-110-66-160-65-35 5-45 37-40 57q5 20 25 36" />
    <path d="M134 326l14-24 24 16-12 26zM150 334l30 34 16-10-24-38M168 318l8-8 28 2 4 20-22 6M180 350l14-22" />
    {/* caliper */}
    <path className="w b" d="M206 318l2-36q4-8 22-6l60 4-16 20-46 16M190 336l-8 38M196 352h30M232 450q-16 28 8 30" />
    <path className="w b" d="M222 386c0-52 22-80 78-102l66 10 40 6 4 22 20-2 8 12-2 34 24 2q-42 12-42 44 10 20 38 20l4 22q-6 20-10 46l-12 24q-40 10-72 2-68 0-88-18-30-26-40-68z" />
    <path d="M236 324l32-34M258 296l24-10M270 300l20-14M240 330v58M300 292v90M332 302l-2 90M372 300q-24 110 20 220M408 322q-8 96 26 182M222 388h26l6 50M250 394h26q-14 36 20 44 30-8 26-30M266 394l4 42M280 394q-4 32 24 36M330 400h24v48h-76l-46-6M326 410v36M250 450q6 34 26 54M290 450l24 66M322 452l18 64M350 452l22 66M370 330q2-20 20-24l18 8M376 328h28l6-16M390 308v20M400 520q4-16 18-12l4 14M428 516l6-14 14 4" />
    <path className="b" d="M168 374l54 2M166 384l60 16M172 394l50-2M176 408l60 10M172 400l-4 14 64 6M186 424l50 6M184 432v8l50 4" />
    <path d="M430 440l24-4M438 450q0 16 14 18M418 322h20" />
    {/* steering knuckle */}
    <path d="M470 350l40-28 18-4q20-8 22 6l-2 28-18 20M500 334l40 8M530 318q14 4 14 20M462 395v104M504 396v130M508 374l40 100v34M520 372l42 98 2 30M548 352l26 106M536 380l30 70M506 474l28 14v32l-30 12M506 486l28-2" />
    <path className="w" d="M452 384l6-18q20-14 38-4 14 16 2 34l-28 8z" />
    <ellipse cx="462" cy="384" rx="11" ry="16" />
    <path className="w" d="M454 512l6-18q20-12 36-2 12 14 2 30l-30 8z" />
    <ellipse cx="464" cy="512" rx="11" ry="16" />
    <path d="M476 372q12 8 6 26M480 500q12 8 4 24" />
    {/* disc */}
    <path className="b" d="M570 464c50-38 100-60 150-61 60 2 95 37 106 84 24 56 38 120 26 188M525 545c75-65 145-105 195-108q30 0 56 18" />
    <path d="M566 480c54-42 110-66 160-66 50 4 76 30 92 60M540 552c70-60 130-96 186-102M575 570c65-80 125-110 185-110q40 4 66 26" />
    <path d="M550 540l24 12M556 534l24 12M586 510l18 16M594 506l16 14M616 486l16 16M624 482l16 16M652 464l14 16M660 460l14 16M690 450l12 14M698 446l12 14M724 442l14 12M732 440l14 12M752 446l26 12" />
    <path d="M575 675c25-65 105-115 155-105q30 10 36 36M630 675c30-58 90-80 136-69 26 24 28 44 24 69M690 566q50 6 76 40M686 675q22-14 42 0" />
    <ellipse cx="695" cy="641" rx="9" ry="14" transform="rotate(22 695 641)" />
    <ellipse cx="760" cy="663" rx="9" ry="14" transform="rotate(22 760 663)" />
    <path d="M692 652q-4-12 6-22M758 674q-4-12 6-22" />
    {/* bracket */}
    <path className="b" d="M484 610l-28 65M528 622l-24 53" />
    <path d="M494 614l-26 61M518 620l-28 55M484 632l30 6M476 652l30 6" />
    <path className="w b" d="M455 574l4-18 24-26 62 14 34 34 4 32-16 12-20-2z" />
    <path d="M470 544l74 34 34-2M544 578l-2 40M458 562l84 38M548 590l28-2M508 536l44 22 20-2" />
    <path className="w b" d="M566 612l22 4 2 16-14 6-14-8zM530 622l28 8 8 12-22 4-16-12zM450 586l30 12-4 22-30-10z" />
    <path d="M456 590l16 26M466 592l-12 20" />
    {/* second caliper, partly scrolled out */}
    <path className="b" d="M124 675l24-76h28l-2 26-16 4-6 46M110 672h20M160 634q56-8 58 41M272 672l6-8h20v10" />
    <path d="M150 604l22 4M136 672l20-50M164 640l-8 32" />
    {/* steel wire */}
    <path className="wire" d={HANGER_PATH} />
    <path className="core" d={HANGER_PATH} stroke="#c9c9d2" />
  </Fig>
);

/* ---------- data ---------- */

const BOOKMARKS = [
  ['Apps', 101, AppsIcon, 0.04],
  ['Quick', 107, FolderIcon, -0.07],
  ['VIDA', 100, VidaLogo, 0.2],
  ['Facebook', 137, () => <FacebookMark size={24} />, -0.12],
  ['Twitter', 113, () => <FaTwitter size={24} color="#1d9bf0" />, -0.44],
  ['Spell Check', 152, ShieldIcon, -0.06],
  ['TVGuide', 127, TvGuideIcon, -0.07],
  ['eBay', 99, EbayIcon, -0.16],
  ['Craigslist', 132, PeaceIcon, -0.06],
  ['Conversion', 150, ConversionIcon, -0.2],
  ['Verizon', 280, VerizonIcon, -0.19],
];

const TABS = [
  ['START', 150, 0.6],
  ['VEHICLE PROFILE', 322, 0.35],
  ['INFORMATION', 271, 0.5],
  ['WORK LIST', 219, 0.13],
  ['DIAGNOSTICS', 266, 0.45],
  ['SOFTWARE', 220, 0.32],
  ['SEARCH', 172, 0.22],
];

function App() {
  return (
    <Screen>
      <GlobalStyle />
      <BrowserFrame>
        <FrameArt width="1920" height="153">
          <defs>
            <linearGradient id="metal" gradientUnits="userSpaceOnUse" x1="0" y1="0" x2="1900" y2="300">
              <stop offset="0" stopColor="#b0b0b0" />
              <stop offset=".06" stopColor="#cecece" />
              <stop offset=".12" stopColor="#b4b4b4" />
              <stop offset=".18" stopColor="#848686" />
              <stop offset=".28" stopColor="#767878" />
              <stop offset=".42" stopColor="#8e8e8e" />
              <stop offset=".48" stopColor="#aaa" />
              <stop offset=".53" stopColor="#dadada" />
              <stop offset=".58" stopColor="#b0b0b0" />
              <stop offset=".64" stopColor="#727574" />
              <stop offset=".78" stopColor="#7d7e7e" />
              <stop offset=".92" stopColor="#969696" />
              <stop offset="1" stopColor="#d0d0d0" />
            </linearGradient>
            <filter id="brush" x="0" y="0" width="100%" height="100%">
              <feTurbulence type="fractalNoise" baseFrequency="0.025 0.6" numOctaves="3" seed="4" />
              <feColorMatrix values="1.6 0 0 0 -.3  1.6 0 0 0 -.3  1.6 0 0 0 -.3  0 0 0 0 1" />
            </filter>
          </defs>
          <rect width="1920" height="153" fill="url(#metal)" />
          <rect width="1920" height="153" filter="url(#brush)" opacity=".16" />
          <path
            d="M0 50.500h3c7 0 10-4 10-10V14C13 6 17 1.500 25 1.500h335c8 0 12 4.500 12 12.500v27c0 6 3 9.500 10 9.500h1538"
            fill="none"
            stroke="#484848"
            strokeWidth="1.6"
          />
        </FrameArt>
        <TabStrip>
          <VidaLogo />
          <TabTitle>V70 XC (01-) / XC70 (-07), 2006, E</TabTitle>
          <TabClose width="14" height="14" stroke="#111" strokeWidth="2.4">
            <path d="m2 2 10 10M12 2 2 12" />
          </TabClose>
          <svg width="18" height="18" stroke="#000" strokeWidth="2.6">
            <path d="M9 0v18M0 9h18" />
          </svg>
          <WindowButtons>
            <svg width="250" height="50" fill="none" stroke="#fff" strokeWidth="1.2">
              <circle cx="11" cy="25" r="10.5" fill="#000" stroke="none" />
              <path d="M6.500 22h9L11 29z" fill="#ccc" stroke="none" />
              <path d="M71 21.500h15M139.500 17.500h11v11h-11zM142.500 17v-3h11v11h-3M208 14l15 15M223 14l-15 15" />
            </svg>
          </WindowButtons>
        </TabStrip>
        <Toolbar>
          <NavIcon><MdArrowBack size={28} /></NavIcon>
          <NavIcon $off><MdArrowForward size={28} /></NavIcon>
          <NavIcon><MdRefresh size={30} /></NavIcon>
          <NavIcon><HomeIcon /></NavIcon>
          <Omnibox>
            <MdExtension size={24} />
            <SiteName>IE Tab</SiteName>
            <Url>
              chrome-extension://hehijbfgiekmjfkfjpbkbammjbdenadd/nhc.htm#url=http://localhost/Vida/Login.do;jsessionid=biLMmByPPQ5tWLsV...
            </Url>
            <MdStarBorder size={25} color="#c8c8c8" />
          </Omnibox>
          <Extensions>
            <SeekIcon />
            <VidaLogo />
            <MdExtension size={26} />
            <Avatar>R</Avatar>
            <MdMoreVert size={30} />
          </Extensions>
        </Toolbar>
        <Bookmarks>
          {BOOKMARKS.map(([name, w, Icon, ls]) => (
            <Bookmark key={name} $w={w} $ls={ls}>
              <Icon />
              <span>{name}</span>
            </Bookmark>
          ))}
          <Overflow>»</Overflow>
          <BarDivider />
          <Bookmark $w={190} $ls={-0.31}>
            <FolderIcon />
            <span>Other bookmarks</span>
          </Bookmark>
          <BarDivider />
          <Bookmark $w={140} $ls={-0.14} $color="#fff">
            <ReadingListIcon />
            <span>Reading list</span>
          </Bookmark>
        </Bookmarks>
      </BrowserFrame>

      <AddressBar>
        <VidaLogo size={30} />
        <AddressLabel>Address:</AddressLabel>
        <AddressInput>http://localhost/Vida/Login.do;jsessionid=biLMmByPPQ5tWLsV3AksKLkO.undefined</AddressInput>
        <GoButton>
          <svg width="10" height="12"><path d="M0 0l10 6-10 6z" fill="#2c4f9e" /></svg>
        </GoButton>
        <AddressTools>
          <svg width="26" height="26" fill="none">
            <path d="M6 6l14 15" stroke="#555" strokeWidth="4.5" />
            <path d="M2 7q4 2 6-1t0-5M19 25q-2-4 1-6t5 0" stroke="#444" strokeWidth="2.6" />
            <path d="M6 6l14 15" stroke="#bbb" strokeWidth="1.5" />
            <path d="M22 3 11 14" stroke="#666" strokeWidth="3.5" />
            <path d="m12 13-8 9" stroke="#39444f" strokeWidth="7" strokeLinecap="round" />
            <path d="m11 14-6 7" stroke="#9db4cc" strokeWidth="3.5" />
          </svg>
          <svg width="24" height="26">
            <path d="M11 7h12v18H12V15h-1z" fill="#9fc0ee" />
            <path d="M13 2H6Q2 2 2 7v2q0 4 6 4" fill="none" stroke="#5a9be0" strokeWidth="3" />
            <path d="m7 8 6 5-6 5z" fill="#5a9be0" />
          </svg>
          <svg width="24" height="26">
            <circle cx="12" cy="13" r="9.5" fill="#2f6fe0" stroke="#b9cff5" strokeWidth="2" />
            <circle cx="12" cy="13" r="8" fill="none" stroke="#1d4fc0" />
            <text x="12" y="18.5" textAnchor="middle" fontSize="15" fontWeight="bold" fill="#fff">?</text>
          </svg>
        </AddressTools>
        <CloseBox>
          <svg width="14" height="14" stroke="#8c8c8c" strokeWidth="3.5"><path d="m1 1 12 12M13 1 1 13" /></svg>
        </CloseBox>
      </AddressBar>

      <Viewport>
        <Page>
          <Head>
            <SideLinks>
              <SideLink $ls={-0.25}>EPORT ERRORS</SideLink>
              <SideLink $off>EHICLE DETAILS</SideLink>
              <SideLink $ls={-0.3}>ELP</SideLink>
            </SideLinks>
            <div>
              <HeadTop>
                <UserName>admin, AME</UserName>
                <svg width="4" height="9" stroke="#000" strokeDasharray="1 1" shapeRendering="crispEdges"><path d="M.5 0v9M3.500 0v9" /></svg>
                <BoldLink $gap={6} $ls={0.2}>LOG OUT</BoldLink>
              </HeadTop>
              <MainTabs>
                {TABS.map(([name, w, ls]) => (
                  <MainTab key={name} $w={w} $ls={ls} $active={name === 'INFORMATION'}>{name}</MainTab>
                ))}
              </MainTabs>
            </div>
          </Head>
          <SubNav>
            <SubItem $w={50} $ls={0.4} $plain>PARTS</SubItem>
            <SubItem $w={82} $ls={0.6} $active>REPAIR</SubItem>
            <SubItem $w={207} $ls={0.39}>PRODUCT SPECIFICATIONS</SubItem>
            <SubItem $w={137} $ls={0.56}>FAULT TRACING</SubItem>
            <SubItem $w={105} $ls={0.38}>BULLETINS</SubItem>
            <SubItem $w={100} $ls={0.38} $off>FORMS</SubItem>
          </SubNav>
          <Body>
            <DocHead>
              <DocIcons>
                <BalloonIcon />
                <BookIcon />
                <WarningIcon />
              </DocIcons>
              <DocTitle>51: Front wheel brake</DocTitle>
              <DocActions>
                <ActionRow $gap={25}>
                  <svg width="13" height="10"><path d="M6 0v10L0 5zM13 0v10L7 5z" /></svg>
                  <svg width="13" height="10"><path d="M0 0v10l6-5zM7 0v10l6-5z" /></svg>
                </ActionRow>
                <ActionRow $gap={6}>
                  <svg width="6" height="10" stroke="#000" strokeDasharray="1 1.5" fill="none"><path d="M2.500 0v10M3 1l3 4-3 4" /></svg>
                  <BoldLink $ls={0.5}>PRINT</BoldLink>
                </ActionRow>
              </DocActions>
            </DocHead>
            <Doc>
              <Figures>
                <CaliperFigure />
                <HangingFigure />
              </Figures>
              <Article>
                <ArticleTitle><mark>Brake</mark> pads front, replacing</ArticleTitle>
                <Line $bold $grey $ls={0.14} $mb={19}>Removal</Line>
                <Line $bold $ls={-0.18} $mb={19}>Note! Minimum thickness for replacing the <Hit>brake</Hit> pads = 2 mm.</Line>
                <Line $bold $grey $ls={-0.17} $mb={22}>Remove the retaining spring and locating pins</Line>
                <Steps $h={280}>
                  <Line $grey>Remove:</Line>
                  <Step $ls={0.2}><span>the retaining spring (3) carefully so that it does not<br />deform</span></Step>
                  <Step $ls={0.29}><span>the protective caps (1) from the two locating pins (2)</span></Step>
                  <Step $ls={0.16}><span>the locating pins, use hex socket 7 mm.</span></Step>
                </Steps>
                <Line $bold $grey $ls={-0.16} $mb={22}>Remove the <Hit>brake</Hit> caliper and <Hit>brake</Hit> pads</Line>
                <Steps $h={71}>
                  <Line $grey>Remove:</Line>
                  <Step $ls={0.08}><span>the <Hit>brake</Hit> caliper from the holder</span></Step>
                  <Step $ls={0.2}><span>the <Hit>brake</Hit> pads.</span></Step>
                </Steps>
                <Line $ls={0.17} $mb={13}>
                  Hang the <Hit>brake</Hit> caliper by a steel wire from the front spring<br />
                  so as not to damage the <Hit>brake</Hit> hose.
                </Line>
                <Line $bold $ls={-0.26}>
                  Note! Do not depress the <Hit>brake</Hit> pedal while the <Hit>brake</Hit>
                </Line>
                <Line $bold>pads are removed.</Line>
              </Article>
              <DocScroll>
                <Chevron dir="up" w={12} h={9} t={4} color="#000" />
                <DocThumb />
                <Chevron dir="down" w={12} h={9} t={4} color="#000" />
              </DocScroll>
            </Doc>
          </Body>
        </Page>
        <VScroll>
          <Chevron dir="up" />
          <VThumb />
          <Chevron dir="down" />
        </VScroll>
      </Viewport>
      <HScroll>
        <Chevron dir="left" />
        <HThumb />
        <Chevron dir="right" />
      </HScroll>

      <Taskbar>
        <StartButton>
          <svg width="24" height="24" fill="#fff">
            <path d="M0 3.500 10.500 2v9.500H0zM11.500 1.800 24 0v11.500H11.500zM0 12.500h10.500V22L0 20.500zM11.500 12.500H24V24l-12.500-1.800z" />
          </svg>
        </StartButton>
        <SearchBox>
          <svg width="26" height="26" fill="none" stroke="#222" strokeWidth="1.8">
            <circle cx="16.5" cy="9" r="8" />
            <path d="M11 15 1 25" />
          </svg>
          <span>Type here to search</span>
        </SearchBox>
        <AppButton $w={72}>
          <svg width="24" height="24" fill="none" stroke="#fff" strokeWidth="3"><circle cx="12" cy="12" r="10" /></svg>
        </AppButton>
        <AppButton $w={70}>
          <svg width="26" height="24" fill="none" stroke="#fff" strokeWidth="1.5">
            <path d="M1 0v3.500h16V0M1 24v-3.500h16V24M2 7h14v10H2zM22.500 0v6M22.500 11v13" />
            <path d="M22.500 7v3" strokeWidth="3" />
          </svg>
        </AppButton>
        <AppButton $w={87} $pr={1}><RunningMark><FirefoxIcon /></RunningMark></AppButton>
        <AppButton $w={70} $pr={8}><EdgeIcon /></AppButton>
        <AppButton $w={73} $active><ChromeIcon /></AppButton>
        <AppButton><ThunderbirdIcon /></AppButton>
        <AppButton><ExplorerIcon /></AppButton>
        <AppButton><StoreIcon /></AppButton>
        <AppButton><GlobeIcon /></AppButton>
        <Tray>
          <MoonIcon />
          <Weather>57°F</Weather>
          <TrayIcons>
            <svg width="20" height="12" fill="none" stroke="#fff" strokeWidth="1.6"><path d="m1 11 9-9 9 9" /></svg>
            <svg width="24" height="26">
              <path d="M3 2h16l2 22H4z" fill="#444" stroke="#ddd" strokeWidth="1.5" />
              <path d="M7 4l8 17" stroke="#bbb" strokeWidth="3" />
              <circle cx="17" cy="16" r="6.5" fill="#fff" />
              <path d="M15 10v11l6-5.500z" fill="#18a818" />
            </svg>
            <svg width="25" height="18">
              <path d="M5 17q-5-1-5-6 1-5 5-5 2-6 8-6 6 1 7 7 5 1 5 6-1 4-5 4z" fill="#8d9498" />
              <path d="M3 17q-4-2-2-6 4-3 9-1 5-4 10 1 5 0 4 4-1 2-4 2z" fill="#fff" />
            </svg>
            <svg width="25" height="18" fill="none" stroke="#fff" strokeWidth="1.5">
              <path d="M7 4h17v12H7z" />
              <path d="M9 6h13v8H9z" fill="#fff" />
              <path d="M1 4h6v4q0 2-3 2t-3-2zM2.500 1v3M5.500 1v3M4 10v5h3" />
            </svg>
            <svg width="22" height="18" fill="none" stroke="#fff" strokeWidth="1.4">
              <path d="M1 6h3l5-5v16l-5-5H1zM13 6l7 7M20 6l-7 7" />
            </svg>
            <svg width="25" height="25" fill="none" stroke="#fff" strokeWidth="1.4">
              <path d="M24 12.500q-1-2-3-2h-5L10.500 1.500H8l2.500 9H5.500L3 7.500H1L2.500 12.500 1 17.500h2l2.500-3h5l-2.500 9h2.500L16 14.500h5q2 0 3-2z" />
            </svg>
          </TrayIcons>
          <Clock>
            <div>12:10 AM</div>
            <div>10/4/2021</div>
          </Clock>
          <svg width="52" height="26" fill="none" stroke="#fff" strokeWidth="1.5">
            <path d="M27 1h24v19h-8l-4 5v-5H27z" />
          </svg>
          <ShowDesktop />
        </Tray>
      </Taskbar>
    </Screen>
  );
}

export default App;
